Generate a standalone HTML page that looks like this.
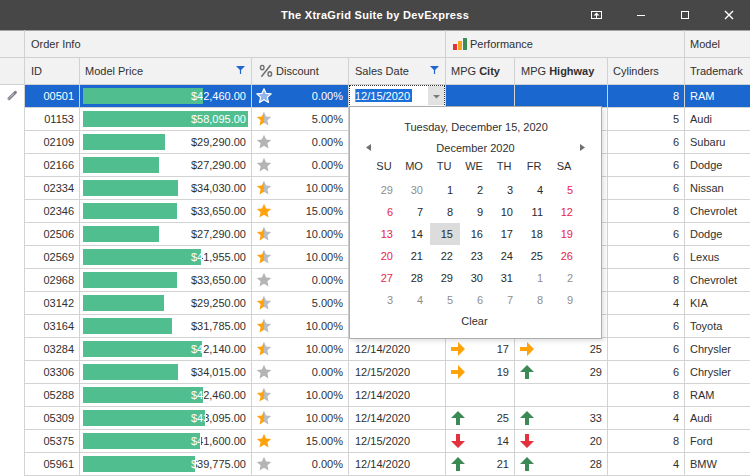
<!DOCTYPE html><html><head><meta charset="utf-8"><style>

*{box-sizing:border-box;margin:0;padding:0}
html,body{width:750px;height:476px;overflow:hidden;background:#fff}
body{position:relative;font-family:"Liberation Sans",sans-serif;font-size:11px;color:#303030}
.a{position:absolute}
.t{position:absolute;white-space:nowrap;line-height:22px;height:22px}
.r{text-align:right}
.hl{position:absolute;height:1px;background:#d3d3d3}
.vl{position:absolute;width:1px;background:#d3d3d3}

</style></head><body>
<div class="a" style="left:0;top:0;width:750px;height:30px;background:#474747"></div>
<div class="a" style="left:0;top:0;width:750px;height:30px;line-height:30px;text-align:center;color:#fff;font-weight:bold;font-size:11px;letter-spacing:0.3px">The XtraGrid Suite by DevExpress</div>
<svg class="a" style="left:585px;top:5px" width="160" height="20" viewBox="585 5 160 20"><rect x="591.5" y="11.5" width="10" height="7" fill="none" stroke="#fff" stroke-width="1"/><path d="M596.5 12.5 L599.5 15.5 H593.5 Z" fill="#fff"/><rect x="596" y="15" width="1" height="3.5" fill="#fff"/><path d="M637 15.5 H645" stroke="#fff" stroke-width="1"/><rect x="681.5" y="11.5" width="7" height="7" fill="none" stroke="#fff" stroke-width="1"/><path d="M725 11 L733 19 M733 11 L725 19" stroke="#fff" stroke-width="1.4"/></svg>
<div class="a" style="left:0;top:30px;width:750px;height:54px;background:#f2f2f2"></div>
<div class="hl" style="left:0;top:57px;width:750px;background:#d1d1d1"></div>
<div class="hl" style="left:0;top:30px;width:750px;background:#a3a3a3"></div>
<div class="hl" style="left:0;top:84px;width:750px;background:#d1d1d1"></div>
<div class="vl" style="left:24px;top:30px;height:54px;background:#d1d1d1"></div>
<div class="vl" style="left:445px;top:30px;height:54px;background:#d1d1d1"></div>
<div class="vl" style="left:684px;top:30px;height:54px;background:#d1d1d1"></div>
<div class="vl" style="left:79px;top:57px;height:27px;background:#d1d1d1"></div>
<div class="vl" style="left:251px;top:57px;height:27px;background:#d1d1d1"></div>
<div class="vl" style="left:348px;top:57px;height:27px;background:#d1d1d1"></div>
<div class="vl" style="left:514px;top:57px;height:27px;background:#d1d1d1"></div>
<div class="vl" style="left:607px;top:57px;height:27px;background:#d1d1d1"></div>
<div class="t" style="left:31px;top:31px;line-height:26px;height:26px">Order Info</div>
<svg class="a" style="left:453px;top:38px" width="14" height="12"><rect x="0" y="6" width="4" height="6" fill="#e0313c"/><rect x="5" y="3" width="4" height="9" fill="#f7a21b"/><rect x="10" y="0" width="4" height="12" fill="#3b8c57"/></svg>
<div class="t" style="left:470px;top:31px;line-height:26px;height:26px">Performance</div>
<div class="t" style="left:690px;top:31px;line-height:26px;height:26px">Model</div>
<div class="t" style="left:31px;top:58px;line-height:26px;height:26px;">ID</div>
<div class="t" style="left:85px;top:58px;line-height:26px;height:26px;">Model Price</div>
<div class="t" style="left:276px;top:58px;line-height:26px;height:26px;">Discount</div>
<div class="t" style="left:355px;top:58px;line-height:26px;height:26px;">Sales Date</div>
<div class="t" style="left:451px;top:58px;line-height:26px;height:26px;">MPG <b>City</b></div>
<div class="t" style="left:521px;top:58px;line-height:26px;height:26px;">MPG <b>Highway</b></div>
<div class="t" style="left:613px;top:58px;line-height:26px;height:26px;">Cylinders</div>
<div class="t" style="left:690px;top:58px;line-height:26px;height:26px;">Trademark</div>
<svg class="a" style="left:256px;top:62px" width="20" height="18" viewBox="256 62 20 18"><ellipse cx="262.2" cy="67.6" rx="1.8" ry="2.2" fill="none" stroke="#6e6e6e" stroke-width="1.4"/><ellipse cx="269.8" cy="73.9" rx="1.8" ry="2.2" fill="none" stroke="#6e6e6e" stroke-width="1.4"/><path d="M270.6 65 L261.4 76.7" stroke="#6e6e6e" stroke-width="1.5"/></svg>
<svg class="a" style="left:236px;top:66px" width="9" height="8" viewBox="0 0 9 8"><path d="M0 0 H9 L5.1 4 V8 H3.9 V4 Z" fill="#1f66d0"/></svg>
<svg class="a" style="left:430px;top:66px" width="9" height="8" viewBox="0 0 9 8"><path d="M0 0 H9 L5.1 4 V8 H3.9 V4 Z" fill="#1f66d0"/></svg>
<div class="vl" style="left:24px;top:84px;height:392px;background:#d3d3d3"></div>
<div class="a" style="left:25px;top:85px;width:725px;height:22px;background:#1a67cf"></div>
<div class="hl" style="left:25px;top:107px;width:725px"></div>
<div class="vl" style="left:79px;top:85px;height:23px"></div>
<div class="vl" style="left:251px;top:85px;height:23px"></div>
<div class="vl" style="left:348px;top:85px;height:23px"></div>
<div class="vl" style="left:445px;top:85px;height:23px"></div>
<div class="vl" style="left:514px;top:85px;height:23px"></div>
<div class="vl" style="left:607px;top:85px;height:23px"></div>
<div class="vl" style="left:684px;top:85px;height:23px"></div>
<div class="t r" style="left:25px;top:85px;width:54px;padding-right:5px;color:#fff">00501</div>
<div class="a" style="left:83px;top:88px;width:120px;height:16px;background:#50be8f"></div>
<div class="a" style="left:204px;top:85px;width:47px;height:22px;overflow:hidden"><div class="t r" style="left:-124px;top:0;width:171px;padding-right:5px;color:#fff">$42,460.00</div></div>
<div class="a" style="left:83px;top:85px;width:120px;height:22px;overflow:hidden"><div class="t r" style="left:-3px;top:0;width:171px;padding-right:5px;color:#fff">$42,460.00</div></div>
<div class="a" style="left:256px;top:88px;width:16px;height:16px"><svg width="16" height="16" viewBox="0 0 16 16"><path d="M8 0.8 L10.1 5.4 L15.2 5.9 L11.4 9.3 L12.5 14.5 L8 11.8 L3.5 14.5 L4.6 9.3 L0.8 5.9 L5.9 5.4 Z" fill="#8fb5ea" stroke="#fff" stroke-width="1.2" stroke-linejoin="round"/></svg></div>
<div class="t r" style="left:252px;top:85px;width:96px;padding-right:5px;color:#fff">0.00%</div>
<div class="t r" style="left:608px;top:85px;width:76px;padding-right:5px;color:#fff">8</div>
<div class="t" style="left:690px;top:85px;color:#fff">RAM</div>
<div class="hl" style="left:25px;top:130px;width:725px"></div>
<div class="vl" style="left:79px;top:108px;height:23px"></div>
<div class="vl" style="left:251px;top:108px;height:23px"></div>
<div class="vl" style="left:348px;top:108px;height:23px"></div>
<div class="vl" style="left:445px;top:108px;height:23px"></div>
<div class="vl" style="left:514px;top:108px;height:23px"></div>
<div class="vl" style="left:607px;top:108px;height:23px"></div>
<div class="vl" style="left:684px;top:108px;height:23px"></div>
<div class="t r" style="left:25px;top:108px;width:54px;padding-right:5px;color:#303030">01153</div>
<div class="a" style="left:83px;top:111px;width:165px;height:16px;background:#50be8f"></div>
<div class="a" style="left:249px;top:108px;width:2px;height:22px;overflow:hidden"><div class="t r" style="left:-169px;top:0;width:171px;padding-right:5px;color:#303030">$58,095.00</div></div>
<div class="a" style="left:83px;top:108px;width:165px;height:22px;overflow:hidden"><div class="t r" style="left:-3px;top:0;width:171px;padding-right:5px;color:#fff">$58,095.00</div></div>
<div class="a" style="left:256px;top:111px;width:16px;height:16px"><svg width="16" height="16" viewBox="0 0 16 16"><defs><clipPath id="hl"><rect x="0" y="0" width="8" height="16"/></clipPath><clipPath id="hr"><rect x="8" y="0" width="8" height="16"/></clipPath></defs><path d="M8 0.8 L10.1 5.4 L15.2 5.9 L11.4 9.3 L12.5 14.5 L8 11.8 L3.5 14.5 L4.6 9.3 L0.8 5.9 L5.9 5.4 Z" fill="#b9bcc0" clip-path="url(#hr)"/><path d="M8 0.8 L10.1 5.4 L15.2 5.9 L11.4 9.3 L12.5 14.5 L8 11.8 L3.5 14.5 L4.6 9.3 L0.8 5.9 L5.9 5.4 Z" fill="#ffa30d" clip-path="url(#hl)"/></svg></div>
<div class="t r" style="left:252px;top:108px;width:96px;padding-right:5px;color:#303030">5.00%</div>
<div class="t r" style="left:608px;top:108px;width:76px;padding-right:5px;color:#303030">5</div>
<div class="t" style="left:690px;top:108px;color:#303030">Audi</div>
<div class="hl" style="left:25px;top:153px;width:725px"></div>
<div class="vl" style="left:79px;top:131px;height:23px"></div>
<div class="vl" style="left:251px;top:131px;height:23px"></div>
<div class="vl" style="left:348px;top:131px;height:23px"></div>
<div class="vl" style="left:445px;top:131px;height:23px"></div>
<div class="vl" style="left:514px;top:131px;height:23px"></div>
<div class="vl" style="left:607px;top:131px;height:23px"></div>
<div class="vl" style="left:684px;top:131px;height:23px"></div>
<div class="t r" style="left:25px;top:131px;width:54px;padding-right:5px;color:#303030">02109</div>
<div class="a" style="left:83px;top:134px;width:82px;height:16px;background:#50be8f"></div>
<div class="a" style="left:166px;top:131px;width:85px;height:22px;overflow:hidden"><div class="t r" style="left:-86px;top:0;width:171px;padding-right:5px;color:#303030">$29,290.00</div></div>
<div class="a" style="left:83px;top:131px;width:82px;height:22px;overflow:hidden"><div class="t r" style="left:-3px;top:0;width:171px;padding-right:5px;color:#fff">$29,290.00</div></div>
<div class="a" style="left:256px;top:134px;width:16px;height:16px"><svg width="16" height="16" viewBox="0 0 16 16"><path d="M8 0.8 L10.1 5.4 L15.2 5.9 L11.4 9.3 L12.5 14.5 L8 11.8 L3.5 14.5 L4.6 9.3 L0.8 5.9 L5.9 5.4 Z" fill="#b4b4b4"/></svg></div>
<div class="t r" style="left:252px;top:131px;width:96px;padding-right:5px;color:#303030">0.00%</div>
<div class="t r" style="left:608px;top:131px;width:76px;padding-right:5px;color:#303030">6</div>
<div class="t" style="left:690px;top:131px;color:#303030">Subaru</div>
<div class="hl" style="left:25px;top:176px;width:725px"></div>
<div class="vl" style="left:79px;top:154px;height:23px"></div>
<div class="vl" style="left:251px;top:154px;height:23px"></div>
<div class="vl" style="left:348px;top:154px;height:23px"></div>
<div class="vl" style="left:445px;top:154px;height:23px"></div>
<div class="vl" style="left:514px;top:154px;height:23px"></div>
<div class="vl" style="left:607px;top:154px;height:23px"></div>
<div class="vl" style="left:684px;top:154px;height:23px"></div>
<div class="t r" style="left:25px;top:154px;width:54px;padding-right:5px;color:#303030">02166</div>
<div class="a" style="left:83px;top:157px;width:76px;height:16px;background:#50be8f"></div>
<div class="a" style="left:160px;top:154px;width:91px;height:22px;overflow:hidden"><div class="t r" style="left:-80px;top:0;width:171px;padding-right:5px;color:#303030">$27,290.00</div></div>
<div class="a" style="left:83px;top:154px;width:76px;height:22px;overflow:hidden"><div class="t r" style="left:-3px;top:0;width:171px;padding-right:5px;color:#fff">$27,290.00</div></div>
<div class="a" style="left:256px;top:157px;width:16px;height:16px"><svg width="16" height="16" viewBox="0 0 16 16"><path d="M8 0.8 L10.1 5.4 L15.2 5.9 L11.4 9.3 L12.5 14.5 L8 11.8 L3.5 14.5 L4.6 9.3 L0.8 5.9 L5.9 5.4 Z" fill="#b4b4b4"/></svg></div>
<div class="t r" style="left:252px;top:154px;width:96px;padding-right:5px;color:#303030">0.00%</div>
<div class="t r" style="left:608px;top:154px;width:76px;padding-right:5px;color:#303030">6</div>
<div class="t" style="left:690px;top:154px;color:#303030">Dodge</div>
<div class="hl" style="left:25px;top:199px;width:725px"></div>
<div class="vl" style="left:79px;top:177px;height:23px"></div>
<div class="vl" style="left:251px;top:177px;height:23px"></div>
<div class="vl" style="left:348px;top:177px;height:23px"></div>
<div class="vl" style="left:445px;top:177px;height:23px"></div>
<div class="vl" style="left:514px;top:177px;height:23px"></div>
<div class="vl" style="left:607px;top:177px;height:23px"></div>
<div class="vl" style="left:684px;top:177px;height:23px"></div>
<div class="t r" style="left:25px;top:177px;width:54px;padding-right:5px;color:#303030">02334</div>
<div class="a" style="left:83px;top:180px;width:95px;height:16px;background:#50be8f"></div>
<div class="a" style="left:179px;top:177px;width:72px;height:22px;overflow:hidden"><div class="t r" style="left:-99px;top:0;width:171px;padding-right:5px;color:#303030">$34,030.00</div></div>
<div class="a" style="left:83px;top:177px;width:95px;height:22px;overflow:hidden"><div class="t r" style="left:-3px;top:0;width:171px;padding-right:5px;color:#fff">$34,030.00</div></div>
<div class="a" style="left:256px;top:180px;width:16px;height:16px"><svg width="16" height="16" viewBox="0 0 16 16"><defs><clipPath id="hl"><rect x="0" y="0" width="8" height="16"/></clipPath><clipPath id="hr"><rect x="8" y="0" width="8" height="16"/></clipPath></defs><path d="M8 0.8 L10.1 5.4 L15.2 5.9 L11.4 9.3 L12.5 14.5 L8 11.8 L3.5 14.5 L4.6 9.3 L0.8 5.9 L5.9 5.4 Z" fill="#b9bcc0" clip-path="url(#hr)"/><path d="M8 0.8 L10.1 5.4 L15.2 5.9 L11.4 9.3 L12.5 14.5 L8 11.8 L3.5 14.5 L4.6 9.3 L0.8 5.9 L5.9 5.4 Z" fill="#ffa30d" clip-path="url(#hl)"/></svg></div>
<div class="t r" style="left:252px;top:177px;width:96px;padding-right:5px;color:#303030">10.00%</div>
<div class="t r" style="left:608px;top:177px;width:76px;padding-right:5px;color:#303030">6</div>
<div class="t" style="left:690px;top:177px;color:#303030">Nissan</div>
<div class="hl" style="left:25px;top:222px;width:725px"></div>
<div class="vl" style="left:79px;top:200px;height:23px"></div>
<div class="vl" style="left:251px;top:200px;height:23px"></div>
<div class="vl" style="left:348px;top:200px;height:23px"></div>
<div class="vl" style="left:445px;top:200px;height:23px"></div>
<div class="vl" style="left:514px;top:200px;height:23px"></div>
<div class="vl" style="left:607px;top:200px;height:23px"></div>
<div class="vl" style="left:684px;top:200px;height:23px"></div>
<div class="t r" style="left:25px;top:200px;width:54px;padding-right:5px;color:#303030">02346</div>
<div class="a" style="left:83px;top:203px;width:94px;height:16px;background:#50be8f"></div>
<div class="a" style="left:178px;top:200px;width:73px;height:22px;overflow:hidden"><div class="t r" style="left:-98px;top:0;width:171px;padding-right:5px;color:#303030">$33,650.00</div></div>
<div class="a" style="left:83px;top:200px;width:94px;height:22px;overflow:hidden"><div class="t r" style="left:-3px;top:0;width:171px;padding-right:5px;color:#fff">$33,650.00</div></div>
<div class="a" style="left:256px;top:203px;width:16px;height:16px"><svg width="16" height="16" viewBox="0 0 16 16"><path d="M8 0.8 L10.1 5.4 L15.2 5.9 L11.4 9.3 L12.5 14.5 L8 11.8 L3.5 14.5 L4.6 9.3 L0.8 5.9 L5.9 5.4 Z" fill="#ffa30d"/></svg></div>
<div class="t r" style="left:252px;top:200px;width:96px;padding-right:5px;color:#303030">15.00%</div>
<div class="t r" style="left:608px;top:200px;width:76px;padding-right:5px;color:#303030">8</div>
<div class="t" style="left:690px;top:200px;color:#303030">Chevrolet</div>
<div class="hl" style="left:25px;top:245px;width:725px"></div>
<div class="vl" style="left:79px;top:223px;height:23px"></div>
<div class="vl" style="left:251px;top:223px;height:23px"></div>
<div class="vl" style="left:348px;top:223px;height:23px"></div>
<div class="vl" style="left:445px;top:223px;height:23px"></div>
<div class="vl" style="left:514px;top:223px;height:23px"></div>
<div class="vl" style="left:607px;top:223px;height:23px"></div>
<div class="vl" style="left:684px;top:223px;height:23px"></div>
<div class="t r" style="left:25px;top:223px;width:54px;padding-right:5px;color:#303030">02506</div>
<div class="a" style="left:83px;top:226px;width:76px;height:16px;background:#50be8f"></div>
<div class="a" style="left:160px;top:223px;width:91px;height:22px;overflow:hidden"><div class="t r" style="left:-80px;top:0;width:171px;padding-right:5px;color:#303030">$27,290.00</div></div>
<div class="a" style="left:83px;top:223px;width:76px;height:22px;overflow:hidden"><div class="t r" style="left:-3px;top:0;width:171px;padding-right:5px;color:#fff">$27,290.00</div></div>
<div class="a" style="left:256px;top:226px;width:16px;height:16px"><svg width="16" height="16" viewBox="0 0 16 16"><defs><clipPath id="hl"><rect x="0" y="0" width="8" height="16"/></clipPath><clipPath id="hr"><rect x="8" y="0" width="8" height="16"/></clipPath></defs><path d="M8 0.8 L10.1 5.4 L15.2 5.9 L11.4 9.3 L12.5 14.5 L8 11.8 L3.5 14.5 L4.6 9.3 L0.8 5.9 L5.9 5.4 Z" fill="#b9bcc0" clip-path="url(#hr)"/><path d="M8 0.8 L10.1 5.4 L15.2 5.9 L11.4 9.3 L12.5 14.5 L8 11.8 L3.5 14.5 L4.6 9.3 L0.8 5.9 L5.9 5.4 Z" fill="#ffa30d" clip-path="url(#hl)"/></svg></div>
<div class="t r" style="left:252px;top:223px;width:96px;padding-right:5px;color:#303030">10.00%</div>
<div class="t r" style="left:608px;top:223px;width:76px;padding-right:5px;color:#303030">6</div>
<div class="t" style="left:690px;top:223px;color:#303030">Dodge</div>
<div class="hl" style="left:25px;top:268px;width:725px"></div>
<div class="vl" style="left:79px;top:246px;height:23px"></div>
<div class="vl" style="left:251px;top:246px;height:23px"></div>
<div class="vl" style="left:348px;top:246px;height:23px"></div>
<div class="vl" style="left:445px;top:246px;height:23px"></div>
<div class="vl" style="left:514px;top:246px;height:23px"></div>
<div class="vl" style="left:607px;top:246px;height:23px"></div>
<div class="vl" style="left:684px;top:246px;height:23px"></div>
<div class="t r" style="left:25px;top:246px;width:54px;padding-right:5px;color:#303030">02569</div>
<div class="a" style="left:83px;top:249px;width:118px;height:16px;background:#50be8f"></div>
<div class="a" style="left:202px;top:246px;width:49px;height:22px;overflow:hidden"><div class="t r" style="left:-122px;top:0;width:171px;padding-right:5px;color:#303030">$41,955.00</div></div>
<div class="a" style="left:83px;top:246px;width:118px;height:22px;overflow:hidden"><div class="t r" style="left:-3px;top:0;width:171px;padding-right:5px;color:#fff">$41,955.00</div></div>
<div class="a" style="left:256px;top:249px;width:16px;height:16px"><svg width="16" height="16" viewBox="0 0 16 16"><defs><clipPath id="hl"><rect x="0" y="0" width="8" height="16"/></clipPath><clipPath id="hr"><rect x="8" y="0" width="8" height="16"/></clipPath></defs><path d="M8 0.8 L10.1 5.4 L15.2 5.9 L11.4 9.3 L12.5 14.5 L8 11.8 L3.5 14.5 L4.6 9.3 L0.8 5.9 L5.9 5.4 Z" fill="#b9bcc0" clip-path="url(#hr)"/><path d="M8 0.8 L10.1 5.4 L15.2 5.9 L11.4 9.3 L12.5 14.5 L8 11.8 L3.5 14.5 L4.6 9.3 L0.8 5.9 L5.9 5.4 Z" fill="#ffa30d" clip-path="url(#hl)"/></svg></div>
<div class="t r" style="left:252px;top:246px;width:96px;padding-right:5px;color:#303030">10.00%</div>
<div class="t r" style="left:608px;top:246px;width:76px;padding-right:5px;color:#303030">6</div>
<div class="t" style="left:690px;top:246px;color:#303030">Lexus</div>
<div class="hl" style="left:25px;top:291px;width:725px"></div>
<div class="vl" style="left:79px;top:269px;height:23px"></div>
<div class="vl" style="left:251px;top:269px;height:23px"></div>
<div class="vl" style="left:348px;top:269px;height:23px"></div>
<div class="vl" style="left:445px;top:269px;height:23px"></div>
<div class="vl" style="left:514px;top:269px;height:23px"></div>
<div class="vl" style="left:607px;top:269px;height:23px"></div>
<div class="vl" style="left:684px;top:269px;height:23px"></div>
<div class="t r" style="left:25px;top:269px;width:54px;padding-right:5px;color:#303030">02968</div>
<div class="a" style="left:83px;top:272px;width:94px;height:16px;background:#50be8f"></div>
<div class="a" style="left:178px;top:269px;width:73px;height:22px;overflow:hidden"><div class="t r" style="left:-98px;top:0;width:171px;padding-right:5px;color:#303030">$33,650.00</div></div>
<div class="a" style="left:83px;top:269px;width:94px;height:22px;overflow:hidden"><div class="t r" style="left:-3px;top:0;width:171px;padding-right:5px;color:#fff">$33,650.00</div></div>
<div class="a" style="left:256px;top:272px;width:16px;height:16px"><svg width="16" height="16" viewBox="0 0 16 16"><path d="M8 0.8 L10.1 5.4 L15.2 5.9 L11.4 9.3 L12.5 14.5 L8 11.8 L3.5 14.5 L4.6 9.3 L0.8 5.9 L5.9 5.4 Z" fill="#b4b4b4"/></svg></div>
<div class="t r" style="left:252px;top:269px;width:96px;padding-right:5px;color:#303030">0.00%</div>
<div class="t r" style="left:608px;top:269px;width:76px;padding-right:5px;color:#303030">8</div>
<div class="t" style="left:690px;top:269px;color:#303030">Chevrolet</div>
<div class="hl" style="left:25px;top:314px;width:725px"></div>
<div class="vl" style="left:79px;top:292px;height:23px"></div>
<div class="vl" style="left:251px;top:292px;height:23px"></div>
<div class="vl" style="left:348px;top:292px;height:23px"></div>
<div class="vl" style="left:445px;top:292px;height:23px"></div>
<div class="vl" style="left:514px;top:292px;height:23px"></div>
<div class="vl" style="left:607px;top:292px;height:23px"></div>
<div class="vl" style="left:684px;top:292px;height:23px"></div>
<div class="t r" style="left:25px;top:292px;width:54px;padding-right:5px;color:#303030">03142</div>
<div class="a" style="left:83px;top:295px;width:81px;height:16px;background:#50be8f"></div>
<div class="a" style="left:165px;top:292px;width:86px;height:22px;overflow:hidden"><div class="t r" style="left:-85px;top:0;width:171px;padding-right:5px;color:#303030">$29,250.00</div></div>
<div class="a" style="left:83px;top:292px;width:81px;height:22px;overflow:hidden"><div class="t r" style="left:-3px;top:0;width:171px;padding-right:5px;color:#fff">$29,250.00</div></div>
<div class="a" style="left:256px;top:295px;width:16px;height:16px"><svg width="16" height="16" viewBox="0 0 16 16"><defs><clipPath id="hl"><rect x="0" y="0" width="8" height="16"/></clipPath><clipPath id="hr"><rect x="8" y="0" width="8" height="16"/></clipPath></defs><path d="M8 0.8 L10.1 5.4 L15.2 5.9 L11.4 9.3 L12.5 14.5 L8 11.8 L3.5 14.5 L4.6 9.3 L0.8 5.9 L5.9 5.4 Z" fill="#b9bcc0" clip-path="url(#hr)"/><path d="M8 0.8 L10.1 5.4 L15.2 5.9 L11.4 9.3 L12.5 14.5 L8 11.8 L3.5 14.5 L4.6 9.3 L0.8 5.9 L5.9 5.4 Z" fill="#ffa30d" clip-path="url(#hl)"/></svg></div>
<div class="t r" style="left:252px;top:292px;width:96px;padding-right:5px;color:#303030">5.00%</div>
<div class="t r" style="left:608px;top:292px;width:76px;padding-right:5px;color:#303030">4</div>
<div class="t" style="left:690px;top:292px;color:#303030">KIA</div>
<div class="hl" style="left:25px;top:337px;width:725px"></div>
<div class="vl" style="left:79px;top:315px;height:23px"></div>
<div class="vl" style="left:251px;top:315px;height:23px"></div>
<div class="vl" style="left:348px;top:315px;height:23px"></div>
<div class="vl" style="left:445px;top:315px;height:23px"></div>
<div class="vl" style="left:514px;top:315px;height:23px"></div>
<div class="vl" style="left:607px;top:315px;height:23px"></div>
<div class="vl" style="left:684px;top:315px;height:23px"></div>
<div class="t r" style="left:25px;top:315px;width:54px;padding-right:5px;color:#303030">03164</div>
<div class="a" style="left:83px;top:318px;width:89px;height:16px;background:#50be8f"></div>
<div class="a" style="left:173px;top:315px;width:78px;height:22px;overflow:hidden"><div class="t r" style="left:-93px;top:0;width:171px;padding-right:5px;color:#303030">$31,785.00</div></div>
<div class="a" style="left:83px;top:315px;width:89px;height:22px;overflow:hidden"><div class="t r" style="left:-3px;top:0;width:171px;padding-right:5px;color:#fff">$31,785.00</div></div>
<div class="a" style="left:256px;top:318px;width:16px;height:16px"><svg width="16" height="16" viewBox="0 0 16 16"><defs><clipPath id="hl"><rect x="0" y="0" width="8" height="16"/></clipPath><clipPath id="hr"><rect x="8" y="0" width="8" height="16"/></clipPath></defs><path d="M8 0.8 L10.1 5.4 L15.2 5.9 L11.4 9.3 L12.5 14.5 L8 11.8 L3.5 14.5 L4.6 9.3 L0.8 5.9 L5.9 5.4 Z" fill="#b9bcc0" clip-path="url(#hr)"/><path d="M8 0.8 L10.1 5.4 L15.2 5.9 L11.4 9.3 L12.5 14.5 L8 11.8 L3.5 14.5 L4.6 9.3 L0.8 5.9 L5.9 5.4 Z" fill="#ffa30d" clip-path="url(#hl)"/></svg></div>
<div class="t r" style="left:252px;top:315px;width:96px;padding-right:5px;color:#303030">10.00%</div>
<div class="t r" style="left:608px;top:315px;width:76px;padding-right:5px;color:#303030">6</div>
<div class="t" style="left:690px;top:315px;color:#303030">Toyota</div>
<div class="hl" style="left:25px;top:360px;width:725px"></div>
<div class="vl" style="left:79px;top:338px;height:23px"></div>
<div class="vl" style="left:251px;top:338px;height:23px"></div>
<div class="vl" style="left:348px;top:338px;height:23px"></div>
<div class="vl" style="left:445px;top:338px;height:23px"></div>
<div class="vl" style="left:514px;top:338px;height:23px"></div>
<div class="vl" style="left:607px;top:338px;height:23px"></div>
<div class="vl" style="left:684px;top:338px;height:23px"></div>
<div class="t r" style="left:25px;top:338px;width:54px;padding-right:5px;color:#303030">03284</div>
<div class="a" style="left:83px;top:341px;width:119px;height:16px;background:#50be8f"></div>
<div class="a" style="left:203px;top:338px;width:48px;height:22px;overflow:hidden"><div class="t r" style="left:-123px;top:0;width:171px;padding-right:5px;color:#303030">$42,140.00</div></div>
<div class="a" style="left:83px;top:338px;width:119px;height:22px;overflow:hidden"><div class="t r" style="left:-3px;top:0;width:171px;padding-right:5px;color:#fff">$42,140.00</div></div>
<div class="a" style="left:256px;top:341px;width:16px;height:16px"><svg width="16" height="16" viewBox="0 0 16 16"><defs><clipPath id="hl"><rect x="0" y="0" width="8" height="16"/></clipPath><clipPath id="hr"><rect x="8" y="0" width="8" height="16"/></clipPath></defs><path d="M8 0.8 L10.1 5.4 L15.2 5.9 L11.4 9.3 L12.5 14.5 L8 11.8 L3.5 14.5 L4.6 9.3 L0.8 5.9 L5.9 5.4 Z" fill="#b9bcc0" clip-path="url(#hr)"/><path d="M8 0.8 L10.1 5.4 L15.2 5.9 L11.4 9.3 L12.5 14.5 L8 11.8 L3.5 14.5 L4.6 9.3 L0.8 5.9 L5.9 5.4 Z" fill="#ffa30d" clip-path="url(#hl)"/></svg></div>
<div class="t r" style="left:252px;top:338px;width:96px;padding-right:5px;color:#303030">10.00%</div>
<div class="t" style="left:355px;top:338px;color:#303030">12/14/2020</div>
<div class="a" style="left:451px;top:342px;width:14px;height:14px"><svg width="14" height="14" viewBox="0 0 14 14"><path d="M0 5 H7 V0 L14 7 L7 14 V9 H0 Z" fill="#ffa30d"/></svg></div>
<div class="t r" style="left:446px;top:338px;width:68px;padding-right:5px;color:#303030">17</div>
<div class="a" style="left:520px;top:342px;width:14px;height:14px"><svg width="14" height="14" viewBox="0 0 14 14"><path d="M0 5 H7 V0 L14 7 L7 14 V9 H0 Z" fill="#ffa30d"/></svg></div>
<div class="t r" style="left:515px;top:338px;width:92px;padding-right:5px;color:#303030">25</div>
<div class="t r" style="left:608px;top:338px;width:76px;padding-right:5px;color:#303030">6</div>
<div class="t" style="left:690px;top:338px;color:#303030">Chrysler</div>
<div class="hl" style="left:25px;top:383px;width:725px"></div>
<div class="vl" style="left:79px;top:361px;height:23px"></div>
<div class="vl" style="left:251px;top:361px;height:23px"></div>
<div class="vl" style="left:348px;top:361px;height:23px"></div>
<div class="vl" style="left:445px;top:361px;height:23px"></div>
<div class="vl" style="left:514px;top:361px;height:23px"></div>
<div class="vl" style="left:607px;top:361px;height:23px"></div>
<div class="vl" style="left:684px;top:361px;height:23px"></div>
<div class="t r" style="left:25px;top:361px;width:54px;padding-right:5px;color:#303030">03306</div>
<div class="a" style="left:83px;top:364px;width:95px;height:16px;background:#50be8f"></div>
<div class="a" style="left:179px;top:361px;width:72px;height:22px;overflow:hidden"><div class="t r" style="left:-99px;top:0;width:171px;padding-right:5px;color:#303030">$34,015.00</div></div>
<div class="a" style="left:83px;top:361px;width:95px;height:22px;overflow:hidden"><div class="t r" style="left:-3px;top:0;width:171px;padding-right:5px;color:#fff">$34,015.00</div></div>
<div class="a" style="left:256px;top:364px;width:16px;height:16px"><svg width="16" height="16" viewBox="0 0 16 16"><path d="M8 0.8 L10.1 5.4 L15.2 5.9 L11.4 9.3 L12.5 14.5 L8 11.8 L3.5 14.5 L4.6 9.3 L0.8 5.9 L5.9 5.4 Z" fill="#b4b4b4"/></svg></div>
<div class="t r" style="left:252px;top:361px;width:96px;padding-right:5px;color:#303030">0.00%</div>
<div class="t" style="left:355px;top:361px;color:#303030">12/15/2020</div>
<div class="a" style="left:451px;top:365px;width:14px;height:14px"><svg width="14" height="14" viewBox="0 0 14 14"><path d="M0 5 H7 V0 L14 7 L7 14 V9 H0 Z" fill="#ffa30d"/></svg></div>
<div class="t r" style="left:446px;top:361px;width:68px;padding-right:5px;color:#303030">19</div>
<div class="a" style="left:520px;top:365px;width:14px;height:14px"><svg width="14" height="14" viewBox="0 0 14 14"><path d="M5 14 V7 H0 L7 0 L14 7 H9 V14 Z" fill="#3b8a55"/></svg></div>
<div class="t r" style="left:515px;top:361px;width:92px;padding-right:5px;color:#303030">29</div>
<div class="t r" style="left:608px;top:361px;width:76px;padding-right:5px;color:#303030">6</div>
<div class="t" style="left:690px;top:361px;color:#303030">Chrysler</div>
<div class="hl" style="left:25px;top:406px;width:725px"></div>
<div class="vl" style="left:79px;top:384px;height:23px"></div>
<div class="vl" style="left:251px;top:384px;height:23px"></div>
<div class="vl" style="left:348px;top:384px;height:23px"></div>
<div class="vl" style="left:445px;top:384px;height:23px"></div>
<div class="vl" style="left:514px;top:384px;height:23px"></div>
<div class="vl" style="left:607px;top:384px;height:23px"></div>
<div class="vl" style="left:684px;top:384px;height:23px"></div>
<div class="t r" style="left:25px;top:384px;width:54px;padding-right:5px;color:#303030">05288</div>
<div class="a" style="left:83px;top:387px;width:120px;height:16px;background:#50be8f"></div>
<div class="a" style="left:204px;top:384px;width:47px;height:22px;overflow:hidden"><div class="t r" style="left:-124px;top:0;width:171px;padding-right:5px;color:#303030">$42,460.00</div></div>
<div class="a" style="left:83px;top:384px;width:120px;height:22px;overflow:hidden"><div class="t r" style="left:-3px;top:0;width:171px;padding-right:5px;color:#fff">$42,460.00</div></div>
<div class="a" style="left:256px;top:387px;width:16px;height:16px"><svg width="16" height="16" viewBox="0 0 16 16"><defs><clipPath id="hl"><rect x="0" y="0" width="8" height="16"/></clipPath><clipPath id="hr"><rect x="8" y="0" width="8" height="16"/></clipPath></defs><path d="M8 0.8 L10.1 5.4 L15.2 5.9 L11.4 9.3 L12.5 14.5 L8 11.8 L3.5 14.5 L4.6 9.3 L0.8 5.9 L5.9 5.4 Z" fill="#b9bcc0" clip-path="url(#hr)"/><path d="M8 0.8 L10.1 5.4 L15.2 5.9 L11.4 9.3 L12.5 14.5 L8 11.8 L3.5 14.5 L4.6 9.3 L0.8 5.9 L5.9 5.4 Z" fill="#ffa30d" clip-path="url(#hl)"/></svg></div>
<div class="t r" style="left:252px;top:384px;width:96px;padding-right:5px;color:#303030">10.00%</div>
<div class="t" style="left:355px;top:384px;color:#303030">12/14/2020</div>
<div class="t r" style="left:608px;top:384px;width:76px;padding-right:5px;color:#303030">8</div>
<div class="t" style="left:690px;top:384px;color:#303030">RAM</div>
<div class="hl" style="left:25px;top:429px;width:725px"></div>
<div class="vl" style="left:79px;top:407px;height:23px"></div>
<div class="vl" style="left:251px;top:407px;height:23px"></div>
<div class="vl" style="left:348px;top:407px;height:23px"></div>
<div class="vl" style="left:445px;top:407px;height:23px"></div>
<div class="vl" style="left:514px;top:407px;height:23px"></div>
<div class="vl" style="left:607px;top:407px;height:23px"></div>
<div class="vl" style="left:684px;top:407px;height:23px"></div>
<div class="t r" style="left:25px;top:407px;width:54px;padding-right:5px;color:#303030">05309</div>
<div class="a" style="left:83px;top:410px;width:122px;height:16px;background:#50be8f"></div>
<div class="a" style="left:206px;top:407px;width:45px;height:22px;overflow:hidden"><div class="t r" style="left:-126px;top:0;width:171px;padding-right:5px;color:#303030">$43,095.00</div></div>
<div class="a" style="left:83px;top:407px;width:122px;height:22px;overflow:hidden"><div class="t r" style="left:-3px;top:0;width:171px;padding-right:5px;color:#fff">$43,095.00</div></div>
<div class="a" style="left:256px;top:410px;width:16px;height:16px"><svg width="16" height="16" viewBox="0 0 16 16"><defs><clipPath id="hl"><rect x="0" y="0" width="8" height="16"/></clipPath><clipPath id="hr"><rect x="8" y="0" width="8" height="16"/></clipPath></defs><path d="M8 0.8 L10.1 5.4 L15.2 5.9 L11.4 9.3 L12.5 14.5 L8 11.8 L3.5 14.5 L4.6 9.3 L0.8 5.9 L5.9 5.4 Z" fill="#b9bcc0" clip-path="url(#hr)"/><path d="M8 0.8 L10.1 5.4 L15.2 5.9 L11.4 9.3 L12.5 14.5 L8 11.8 L3.5 14.5 L4.6 9.3 L0.8 5.9 L5.9 5.4 Z" fill="#ffa30d" clip-path="url(#hl)"/></svg></div>
<div class="t r" style="left:252px;top:407px;width:96px;padding-right:5px;color:#303030">10.00%</div>
<div class="t" style="left:355px;top:407px;color:#303030">12/14/2020</div>
<div class="a" style="left:451px;top:411px;width:14px;height:14px"><svg width="14" height="14" viewBox="0 0 14 14"><path d="M5 14 V7 H0 L7 0 L14 7 H9 V14 Z" fill="#3b8a55"/></svg></div>
<div class="t r" style="left:446px;top:407px;width:68px;padding-right:5px;color:#303030">25</div>
<div class="a" style="left:520px;top:411px;width:14px;height:14px"><svg width="14" height="14" viewBox="0 0 14 14"><path d="M5 14 V7 H0 L7 0 L14 7 H9 V14 Z" fill="#3b8a55"/></svg></div>
<div class="t r" style="left:515px;top:407px;width:92px;padding-right:5px;color:#303030">33</div>
<div class="t r" style="left:608px;top:407px;width:76px;padding-right:5px;color:#303030">4</div>
<div class="t" style="left:690px;top:407px;color:#303030">Audi</div>
<div class="hl" style="left:25px;top:452px;width:725px"></div>
<div class="vl" style="left:79px;top:430px;height:23px"></div>
<div class="vl" style="left:251px;top:430px;height:23px"></div>
<div class="vl" style="left:348px;top:430px;height:23px"></div>
<div class="vl" style="left:445px;top:430px;height:23px"></div>
<div class="vl" style="left:514px;top:430px;height:23px"></div>
<div class="vl" style="left:607px;top:430px;height:23px"></div>
<div class="vl" style="left:684px;top:430px;height:23px"></div>
<div class="t r" style="left:25px;top:430px;width:54px;padding-right:5px;color:#303030">05375</div>
<div class="a" style="left:83px;top:433px;width:117px;height:16px;background:#50be8f"></div>
<div class="a" style="left:201px;top:430px;width:50px;height:22px;overflow:hidden"><div class="t r" style="left:-121px;top:0;width:171px;padding-right:5px;color:#303030">$41,600.00</div></div>
<div class="a" style="left:83px;top:430px;width:117px;height:22px;overflow:hidden"><div class="t r" style="left:-3px;top:0;width:171px;padding-right:5px;color:#fff">$41,600.00</div></div>
<div class="a" style="left:256px;top:433px;width:16px;height:16px"><svg width="16" height="16" viewBox="0 0 16 16"><path d="M8 0.8 L10.1 5.4 L15.2 5.9 L11.4 9.3 L12.5 14.5 L8 11.8 L3.5 14.5 L4.6 9.3 L0.8 5.9 L5.9 5.4 Z" fill="#ffa30d"/></svg></div>
<div class="t r" style="left:252px;top:430px;width:96px;padding-right:5px;color:#303030">15.00%</div>
<div class="t" style="left:355px;top:430px;color:#303030">12/15/2020</div>
<div class="a" style="left:451px;top:434px;width:14px;height:14px"><svg width="14" height="14" viewBox="0 0 14 14"><path d="M5 0 V7 H0 L7 14 L14 7 H9 V0 Z" fill="#e4323d"/></svg></div>
<div class="t r" style="left:446px;top:430px;width:68px;padding-right:5px;color:#303030">14</div>
<div class="a" style="left:520px;top:434px;width:14px;height:14px"><svg width="14" height="14" viewBox="0 0 14 14"><path d="M5 0 V7 H0 L7 14 L14 7 H9 V0 Z" fill="#e4323d"/></svg></div>
<div class="t r" style="left:515px;top:430px;width:92px;padding-right:5px;color:#303030">20</div>
<div class="t r" style="left:608px;top:430px;width:76px;padding-right:5px;color:#303030">8</div>
<div class="t" style="left:690px;top:430px;color:#303030">Ford</div>
<div class="hl" style="left:25px;top:475px;width:725px"></div>
<div class="vl" style="left:79px;top:453px;height:23px"></div>
<div class="vl" style="left:251px;top:453px;height:23px"></div>
<div class="vl" style="left:348px;top:453px;height:23px"></div>
<div class="vl" style="left:445px;top:453px;height:23px"></div>
<div class="vl" style="left:514px;top:453px;height:23px"></div>
<div class="vl" style="left:607px;top:453px;height:23px"></div>
<div class="vl" style="left:684px;top:453px;height:23px"></div>
<div class="t r" style="left:25px;top:453px;width:54px;padding-right:5px;color:#303030">05961</div>
<div class="a" style="left:83px;top:456px;width:112px;height:16px;background:#50be8f"></div>
<div class="a" style="left:196px;top:453px;width:55px;height:22px;overflow:hidden"><div class="t r" style="left:-116px;top:0;width:171px;padding-right:5px;color:#303030">$39,775.00</div></div>
<div class="a" style="left:83px;top:453px;width:112px;height:22px;overflow:hidden"><div class="t r" style="left:-3px;top:0;width:171px;padding-right:5px;color:#fff">$39,775.00</div></div>
<div class="a" style="left:256px;top:456px;width:16px;height:16px"><svg width="16" height="16" viewBox="0 0 16 16"><path d="M8 0.8 L10.1 5.4 L15.2 5.9 L11.4 9.3 L12.5 14.5 L8 11.8 L3.5 14.5 L4.6 9.3 L0.8 5.9 L5.9 5.4 Z" fill="#b4b4b4"/></svg></div>
<div class="t r" style="left:252px;top:453px;width:96px;padding-right:5px;color:#303030">0.00%</div>
<div class="t" style="left:355px;top:453px;color:#303030">12/14/2020</div>
<div class="a" style="left:451px;top:457px;width:14px;height:14px"><svg width="14" height="14" viewBox="0 0 14 14"><path d="M5 14 V7 H0 L7 0 L14 7 H9 V14 Z" fill="#3b8a55"/></svg></div>
<div class="t r" style="left:446px;top:453px;width:68px;padding-right:5px;color:#303030">21</div>
<div class="a" style="left:520px;top:457px;width:14px;height:14px"><svg width="14" height="14" viewBox="0 0 14 14"><path d="M5 14 V7 H0 L7 0 L14 7 H9 V14 Z" fill="#3b8a55"/></svg></div>
<div class="t r" style="left:515px;top:453px;width:92px;padding-right:5px;color:#303030">28</div>
<div class="t r" style="left:608px;top:453px;width:76px;padding-right:5px;color:#303030">4</div>
<div class="t" style="left:690px;top:453px;color:#303030">BMW</div>
<svg class="a" style="left:2px;top:86px" width="20" height="18" viewBox="2 86 20 18"><path d="M9 98.6 L15.4 92.4" stroke="#857d8a" stroke-width="3" stroke-linecap="round"/><path d="M8.2 99.6 L9.6 97.2" stroke="#aaa4ad" stroke-width="1.2"/><path d="M10.2 97.2 L14 93.6" stroke="#d6d2d8" stroke-width="1"/></svg>
<div class="a" style="left:349px;top:85px;width:96px;height:22px;background:#fff;border:1px dotted #333"></div>
<div class="a" style="left:428px;top:86px;width:16px;height:19px;background:#e2e2e2"></div>
<svg class="a" style="left:433px;top:95px" width="7" height="4"><path d="M0 0 H7 L3.5 3.5 Z" fill="#7a7a7a"/></svg>
<div class="a" style="left:355px;top:89px;width:57px;height:13px;background:#1a70d8"></div>
<div class="a" style="left:355px;top:89px;width:1px;height:13px;background:#f08020"></div>
<div class="t" style="left:355px;top:85px;color:#fff">12/15/2020</div>
<div class="a" style="left:349px;top:106px;width:253px;height:233px;background:#fff;border:1px solid #acacac;box-shadow:2px 2px 5px rgba(0,0,0,0.13)"></div>
<div class="t" style="left:349px;top:116px;width:253px;text-align:center;padding-left:1px">Tuesday, December 15, 2020</div>
<div class="t" style="left:349px;top:137px;width:253px;text-align:center;padding-left:0px">December 2020</div>
<svg class="a" style="left:366px;top:144px" width="6" height="7"><path d="M5 0 V7 L0 3.5 Z" fill="#707070"/></svg>
<svg class="a" style="left:580px;top:144px" width="6" height="7"><path d="M0 0 V7 L5 3.5 Z" fill="#707070"/></svg>
<div class="t" style="left:369px;top:155px;width:30px;text-align:center">SU</div>
<div class="t" style="left:399px;top:155px;width:30px;text-align:center">MO</div>
<div class="t" style="left:429px;top:155px;width:30px;text-align:center">TU</div>
<div class="t" style="left:459px;top:155px;width:30px;text-align:center">WE</div>
<div class="t" style="left:489px;top:155px;width:30px;text-align:center">TH</div>
<div class="t" style="left:519px;top:155px;width:30px;text-align:center">FR</div>
<div class="t" style="left:549px;top:155px;width:30px;text-align:center">SA</div>
<div class="a" style="left:430px;top:223px;width:30px;height:22px;background:#dcdcdc"></div>
<div class="t r" style="left:370px;top:179px;width:30px;padding-right:7px;color:#8e8e8e">29</div>
<div class="t r" style="left:400px;top:179px;width:30px;padding-right:7px;color:#8e8e8e">30</div>
<div class="t r" style="left:430px;top:179px;width:30px;padding-right:7px;color:#2a2a2a">1</div>
<div class="t r" style="left:460px;top:179px;width:30px;padding-right:7px;color:#2a2a2a">2</div>
<div class="t r" style="left:490px;top:179px;width:30px;padding-right:7px;color:#2a2a2a">3</div>
<div class="t r" style="left:520px;top:179px;width:30px;padding-right:7px;color:#2a2a2a">4</div>
<div class="t r" style="left:550px;top:179px;width:30px;padding-right:7px;color:#e8254a">5</div>
<div class="t r" style="left:370px;top:201px;width:30px;padding-right:7px;color:#e8254a">6</div>
<div class="t r" style="left:400px;top:201px;width:30px;padding-right:7px;color:#2a2a2a">7</div>
<div class="t r" style="left:430px;top:201px;width:30px;padding-right:7px;color:#2a2a2a">8</div>
<div class="t r" style="left:460px;top:201px;width:30px;padding-right:7px;color:#2a2a2a">9</div>
<div class="t r" style="left:490px;top:201px;width:30px;padding-right:7px;color:#2a2a2a">10</div>
<div class="t r" style="left:520px;top:201px;width:30px;padding-right:7px;color:#2a2a2a">11</div>
<div class="t r" style="left:550px;top:201px;width:30px;padding-right:7px;color:#e8254a">12</div>
<div class="t r" style="left:370px;top:223px;width:30px;padding-right:7px;color:#e8254a">13</div>
<div class="t r" style="left:400px;top:223px;width:30px;padding-right:7px;color:#2a2a2a">14</div>
<div class="t r" style="left:430px;top:223px;width:30px;padding-right:7px;color:#2a2a2a">15</div>
<div class="t r" style="left:460px;top:223px;width:30px;padding-right:7px;color:#2a2a2a">16</div>
<div class="t r" style="left:490px;top:223px;width:30px;padding-right:7px;color:#2a2a2a">17</div>
<div class="t r" style="left:520px;top:223px;width:30px;padding-right:7px;color:#2a2a2a">18</div>
<div class="t r" style="left:550px;top:223px;width:30px;padding-right:7px;color:#e8254a">19</div>
<div class="t r" style="left:370px;top:245px;width:30px;padding-right:7px;color:#e8254a">20</div>
<div class="t r" style="left:400px;top:245px;width:30px;padding-right:7px;color:#2a2a2a">21</div>
<div class="t r" style="left:430px;top:245px;width:30px;padding-right:7px;color:#2a2a2a">22</div>
<div class="t r" style="left:460px;top:245px;width:30px;padding-right:7px;color:#2a2a2a">23</div>
<div class="t r" style="left:490px;top:245px;width:30px;padding-right:7px;color:#2a2a2a">24</div>
<div class="t r" style="left:520px;top:245px;width:30px;padding-right:7px;color:#2a2a2a">25</div>
<div class="t r" style="left:550px;top:245px;width:30px;padding-right:7px;color:#e8254a">26</div>
<div class="t r" style="left:370px;top:267px;width:30px;padding-right:7px;color:#e8254a">27</div>
<div class="t r" style="left:400px;top:267px;width:30px;padding-right:7px;color:#2a2a2a">28</div>
<div class="t r" style="left:430px;top:267px;width:30px;padding-right:7px;color:#2a2a2a">29</div>
<div class="t r" style="left:460px;top:267px;width:30px;padding-right:7px;color:#2a2a2a">30</div>
<div class="t r" style="left:490px;top:267px;width:30px;padding-right:7px;color:#2a2a2a">31</div>
<div class="t r" style="left:520px;top:267px;width:30px;padding-right:7px;color:#8e8e8e">1</div>
<div class="t r" style="left:550px;top:267px;width:30px;padding-right:7px;color:#8e8e8e">2</div>
<div class="t r" style="left:370px;top:289px;width:30px;padding-right:7px;color:#8e8e8e">3</div>
<div class="t r" style="left:400px;top:289px;width:30px;padding-right:7px;color:#8e8e8e">4</div>
<div class="t r" style="left:430px;top:289px;width:30px;padding-right:7px;color:#8e8e8e">5</div>
<div class="t r" style="left:460px;top:289px;width:30px;padding-right:7px;color:#8e8e8e">6</div>
<div class="t r" style="left:490px;top:289px;width:30px;padding-right:7px;color:#8e8e8e">7</div>
<div class="t r" style="left:520px;top:289px;width:30px;padding-right:7px;color:#8e8e8e">8</div>
<div class="t r" style="left:550px;top:289px;width:30px;padding-right:7px;color:#8e8e8e">9</div>
<div class="t" style="left:348px;top:310px;width:253px;text-align:center">Clear</div>
</body></html>
